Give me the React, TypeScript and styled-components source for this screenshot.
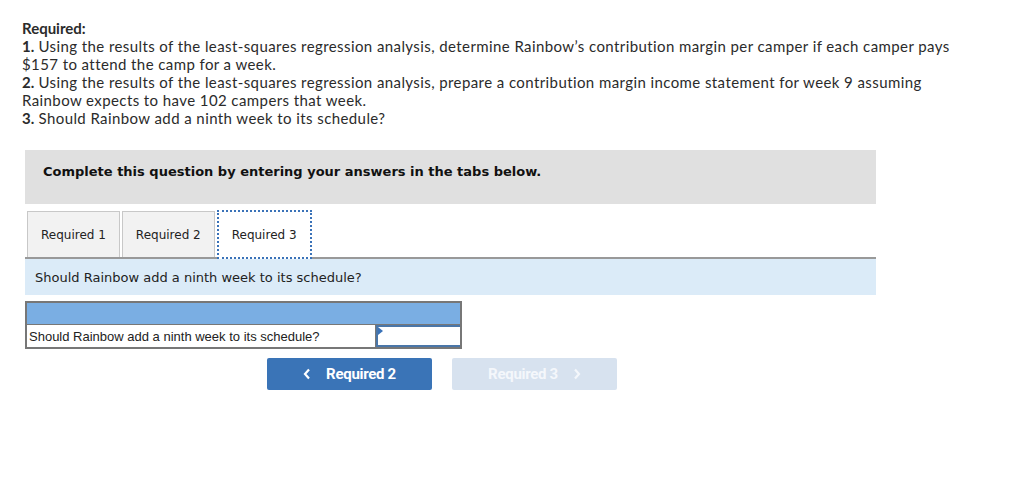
import React from "react";
import styled, { createGlobalStyle } from "styled-components";

const Global = createGlobalStyle`
  html, body { margin: 0; padding: 0; background: #fff; }
  body { font-family: Lato, "Open Sans", sans-serif; color: #222; }
`;

const Page = styled.div`
  padding: 19px 0 0 22px;
  width: 1010px;
`;

const Prompt = styled.div`
  font-family: Lato, sans-serif;
  font-size: 15px;
  line-height: 18px;
  letter-spacing: 0.41px;
  color: #2b2b2b;
`;

const Strong = styled.b`
  font-weight: 700;
  letter-spacing: 0;
`;

const Panel = styled.div`
  margin: 23px 0 0 3px;
  width: 851px;
`;

const Banner = styled.div`
  background: #e0e0e0;
  height: 54px;
  box-sizing: border-box;
  padding: 14px 0 0 18px;
  font-family: "DejaVu Sans", Verdana, sans-serif;
  font-weight: 700;
  font-size: 13px;
  line-height: 16px;
  color: #111;
`;

const TabRow = styled.div`
  display: flex;
  gap: 2px;
  margin-top: 7px;
  padding-left: 2px;
  border-bottom: 2px solid #999;
  height: 46px;
  align-items: flex-start;
`;

const Tab = styled.div<{ $active?: boolean }>`
  box-sizing: border-box;
  height: ${(p) => (p.$active ? "49px" : "46px")};
  padding: 0 13px;
  display: flex;
  align-items: center;
  font-family: "DejaVu Sans", Verdana, sans-serif;
  font-size: 12px;
  color: #222;
  background: ${(p) => (p.$active ? "#fff" : "#f2f2f2")};
  border: ${(p) => (p.$active ? "2px dotted #3a72b8" : "1px solid #c8c8c8")};
  border-bottom: ${(p) => (p.$active ? "2px dotted #3a72b8" : "none")};
  margin-top: ${(p) => (p.$active ? "-1px" : "0")};
  position: relative;
  z-index: ${(p) => (p.$active ? 1 : 0)};
`;

const InfoBar = styled.div`
  background: #dbebf8;
  height: 36px;
  display: flex;
  align-items: center;
  padding-left: 10px;
  font-family: "DejaVu Sans", Verdana, sans-serif;
  font-size: 13px;
  color: #222;
`;

const AnswerTable = styled.div`
  margin-top: 6px;
  width: 437px;
  box-sizing: border-box;
  border: 2px solid #777;
`;

const TableHead = styled.div`
  background: #7aaee3;
  height: 21px;
  border-bottom: 1px solid #777;
`;

const TableRow = styled.div`
  display: flex;
  height: 22px;
`;

const Question = styled.div`
  flex: 1;
  display: flex;
  align-items: center;
  padding-left: 2px;
  font-family: "Liberation Sans", Arial, sans-serif;
  font-size: 13px;
  color: #222;
  border-right: 1px solid #777;
`;

const AnswerCell = styled.div`
  width: 84px;
  box-sizing: border-box;
  border: 2px solid #4a76a8;
  border-right: none;
  position: relative;
`;

const Marker = styled.span`
  position: absolute;
  left: 0;
  top: 0;
  width: 0;
  height: 0;
  border-top: 4px solid transparent;
  border-bottom: 4px solid transparent;
  border-left: 5px solid #3a72b8;
`;

const NavRow = styled.div`
  display: flex;
  gap: 20px;
  margin-top: 9px;
  padding-left: 242px;
`;

const NavButton = styled.button<{ $disabled?: boolean }>`
  width: 165px;
  height: 32px;
  border: none;
  border-radius: 2px;
  background: ${(p) => (p.$disabled ? "#d7e2ef" : "#3a74b7")};
  color: ${(p) => (p.$disabled ? "#f4f7fb" : "#fff")};
  font-family: Roboto, "Liberation Sans", sans-serif;
  font-weight: 700;
  font-size: 15px;
  letter-spacing: -0.3px;
  display: flex;
  align-items: center;
  justify-content: center;
  gap: 15px;
  cursor: ${(p) => (p.$disabled ? "default" : "pointer")};
  padding: 0;
`;

const Chevron = ({ dir }: { dir: "left" | "right" }) => (
  <svg width="8" height="12" viewBox="0 0 8 12">
    <path
      d={dir === "left" ? "M6 1.5 L2 6 L6 10.5" : "M2 1.5 L6 6 L2 10.5"}
      fill="none"
      stroke="currentColor"
      strokeWidth="2.2"
    />
  </svg>
);

export default function App() {
  return (
    <>
      <Global />
      <Page>
        <Prompt>
          <Strong>Required:</Strong>
          <br />
          <Strong>1.</Strong> Using the results of the least-squares regression analysis, determine Rainbow’s contribution margin per camper if each camper pays
          <br />
          $157 to attend the camp for a week.
          <br />
          <Strong>2.</Strong> Using the results of the least-squares regression analysis, prepare a contribution margin income statement for week 9 assuming
          <br />
          Rainbow expects to have 102 campers that week.
          <br />
          <Strong>3.</Strong> Should Rainbow add a ninth week to its schedule?
        </Prompt>
        <Panel>
          <Banner>Complete this question by entering your answers in the tabs below.</Banner>
          <TabRow>
            <Tab>Required 1</Tab>
            <Tab>Required 2</Tab>
            <Tab $active>Required 3</Tab>
          </TabRow>
          <InfoBar>Should Rainbow add a ninth week to its schedule?</InfoBar>
          <AnswerTable>
            <TableHead />
            <TableRow>
              <Question>Should Rainbow add a ninth week to its schedule?</Question>
              <AnswerCell>
                <Marker />
              </AnswerCell>
            </TableRow>
          </AnswerTable>
          <NavRow>
            <NavButton>
              <Chevron dir="left" />
              Required 2
            </NavButton>
            <NavButton $disabled>
              Required 3
              <Chevron dir="right" />
            </NavButton>
          </NavRow>
        </Panel>
      </Page>
    </>
  );
}
